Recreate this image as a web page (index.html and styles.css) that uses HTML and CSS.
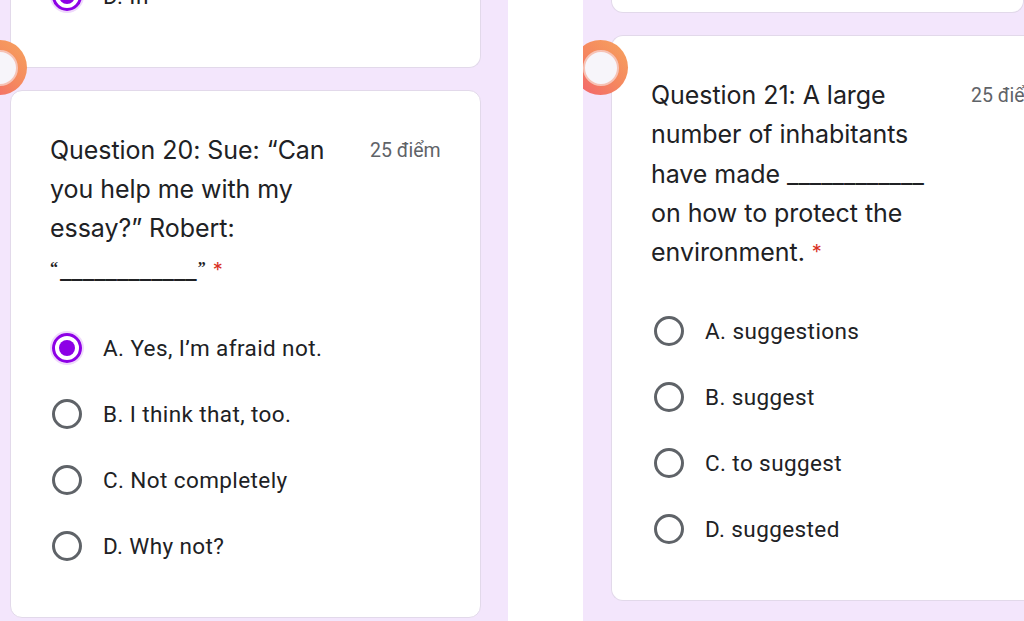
FILE: index.html
```html
<!DOCTYPE html>
<html lang="vi">
<head>
<meta charset="utf-8">
<title>Quiz</title>
<link rel="stylesheet" href="styles.css">
</head>
<body>
<div class="page">
  <section class="panel panel-left">
    <div class="card card-top-left">
      <div class="option option-cut">
        <span class="radio radio-on"></span>
        <span class="opt-text">D. In</span>
      </div>
    </div>
    <div class="card card-q">
      <div class="q-head">
        <div class="q-text">Question 20: Sue: “Can you help me with my essay?” Robert: <span class="blank"><span class="small-q">“</span><span class="under">____________</span><span class="small-q">”</span></span> <span class="req">*</span></div>
        <div class="points">25 điểm</div>
      </div>
      <div class="options">
        <div class="option"><span class="radio radio-on"></span><span class="opt-text">A. Yes, I’m afraid not.</span></div>
        <div class="option"><span class="radio"></span><span class="opt-text">B. I think that, too.</span></div>
        <div class="option"><span class="radio"></span><span class="opt-text">C. Not completely</span></div>
        <div class="option"><span class="radio"></span><span class="opt-text">D. Why not?</span></div>
      </div>
    </div>
    <div class="ring ring-left"></div>
  </section>
  <div class="gap"></div>
  <section class="panel panel-right">
    <div class="card card-top-right"></div>
    <div class="card card-q card-q-right">
      <div class="q-head">
        <div class="q-text">Question 21: A large number of inhabitants have made <span class="under">____________</span> on how to protect the environment. <span class="req">*</span></div>
        <div class="points">25 điểm</div>
      </div>
      <div class="options">
        <div class="option"><span class="radio"></span><span class="opt-text">A. suggestions</span></div>
        <div class="option"><span class="radio"></span><span class="opt-text">B. suggest</span></div>
        <div class="option"><span class="radio"></span><span class="opt-text">C. to suggest</span></div>
        <div class="option"><span class="radio"></span><span class="opt-text">D. suggested</span></div>
      </div>
    </div>
    <div class="ring ring-right"></div>
  </section>
</div>
</body>
</html>
```
FILE: styles.css
```css
* { box-sizing: border-box; }
html, body { margin: 0; padding: 0; background: #ffffff; }
body { width: 1024px; height: 621px; overflow: hidden; font-family: "Roboto", sans-serif; color: #202124; }

.page { display: flex; height: 621px; }

.panel {
  position: relative;
  overflow: hidden;
  background: #f3e6fc;
  display: flex;
  flex-direction: column;
  gap: 22px;
}
.panel-left { width: 508px; padding-left: 10px; padding-right: 27px; }
.gap { width: 75px; background: #ffffff; }
.panel-right { flex: 1; padding-left: 28px; }

.card {
  background: #ffffff;
  border: 1px solid #e2d9ea;
  border-radius: 12px;
  flex: none;
}
.card-top-left {
  height: 68px;
  border-top: none;
  border-radius: 0 0 12px 12px;
  overflow: hidden;
  padding-left: 41px;
}
.card-top-right {
  height: 13px;
  border-top: none;
  border-radius: 0 0 12px 12px;
}
.card-q { padding: 40px 0 38px 39px; }
.card-q-right { width: 440px; border-right: none; border-radius: 12px 0 0 12px; }

.q-head { display: flex; align-items: flex-start; }
.q-text {
  width: 300px;
  font-family: "Inter", "Roboto", sans-serif;
  font-size: 25px;
  line-height: 39px;
  letter-spacing: -0.05px;
  color: #202124;
}
.card-q-right .q-text { line-height: 39.3px; }
.blank { white-space: nowrap; }
.small-q {
  font-family: "Liberation Serif", serif;
  font-weight: bold;
  font-size: 16px;
  vertical-align: 6px;
}
.under { letter-spacing: 0; }
.blank .under { margin: 0 1px 0 2px; }
.req { color: #d93025; font-size: 20px; vertical-align: 2px; }
.points {
  margin-left: 20px;
  font-family: "Roboto", sans-serif;
  font-size: 19.5px;
  line-height: 39px;
  color: #5f6368;
  white-space: nowrap;
}

.options { margin-top: 25px; padding-left: 2px; }
.card-q-right .options { margin-top: 26px; padding-left: 3px; }
.option {
  display: flex;
  align-items: center;
  height: 66px;
  gap: 21px;
}
.option-cut { margin-top: -37px; }
.opt-text {
  font-family: "Roboto", sans-serif;
  font-size: 22.5px;
  color: #202124;
  letter-spacing: 0.4px;
}
.radio {
  width: 30px;
  height: 30px;
  border: 3px solid #5f6368;
  border-radius: 50%;
  flex: none;
  position: relative;
}
.radio-on {
  border-color: #8d00e6;
  box-shadow: 0 0 0 2px #efd9fb;
}
.radio-on::after {
  content: "";
  position: absolute;
  left: 4px; top: 4px;
  width: 16px; height: 16px;
  border-radius: 50%;
  background: #8d00e6;
}

.ring {
  position: absolute;
  width: 55px;
  height: 55px;
  border-radius: 50%;
  background: linear-gradient(45deg, #f2606e 0%, #f5875f 50%, #f6a35e 100%);
  display: flex;
  align-items: center;
  justify-content: center;
}
.ring::after {
  content: "";
  width: 36px;
  height: 36px;
  border-radius: 50%;
  background: #f7f5fa;
  border: 2px solid #f6c3b6;
  box-sizing: border-box;
}
.ring-left { left: -28px; top: 40px; }
.ring-right { left: -10px; top: 40px; }
```
